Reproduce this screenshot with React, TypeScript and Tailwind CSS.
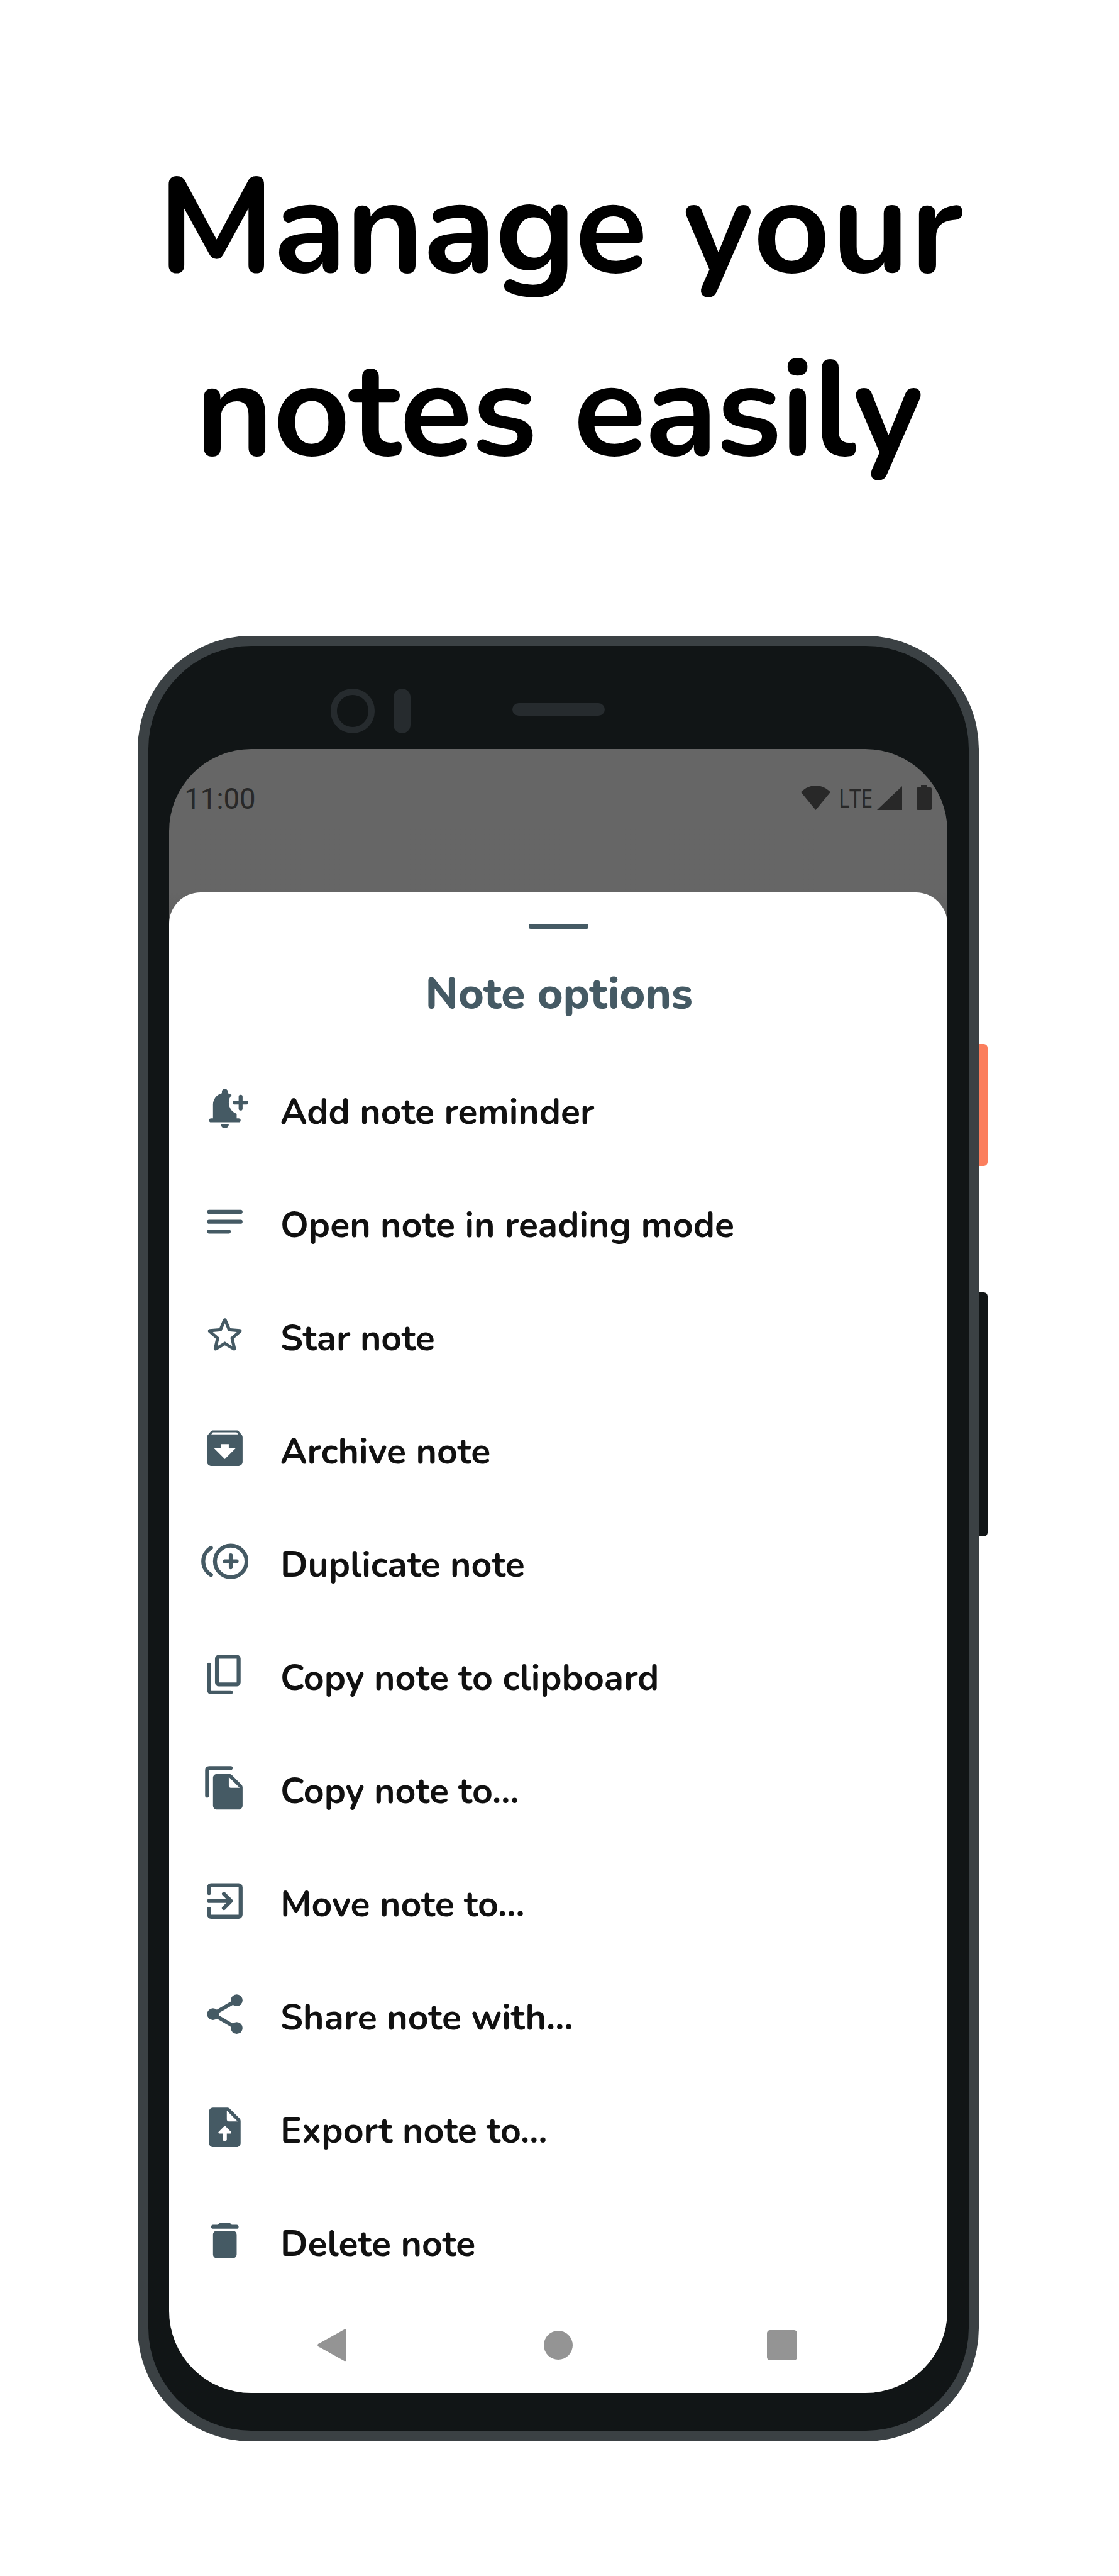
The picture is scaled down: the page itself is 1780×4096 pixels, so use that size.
import type { ReactNode } from "react";

const round = {
  fill: "none",
  stroke: "currentColor",
  strokeWidth: 2,
  strokeLinecap: "round",
  strokeLinejoin: "round",
} as const;

const items: { label: string; icon: ReactNode }[] = [
  {
    label: "Add note reminder",
    icon: (
      <>
        <path d="M10 20h4c0 1.1-.9 2-2 2s-2-.9-2-2zM14 9c0 2.61 1.67 4.83 4 5.66V17h1a1 1 0 0 1 0 2H5a1 1 0 0 1 0-2h1v-7c0-2.79 1.91-5.14 4.5-5.8V3.5c0-.83.67-1.5 1.5-1.5s1.5.67 1.5 1.5v.7c.71.18 1.36.49 1.95.9C14.54 6.14 14 7.51 14 9z" />
        <path d="M20 6v6M17 9h6" {...round} />
      </>
    ),
  },
  { label: "Open note in reading mode", icon: <path d="M4 7h16M4 12h16M4 17h10" {...round} /> },
  {
    label: "Star note",
    icon: (
      <path d="M19.65 9.04l-4.84-.42-1.89-4.45c-.34-.81-1.5-.81-1.84 0L9.19 8.63l-4.83.41c-.88.07-1.24 1.17-.57 1.75l3.67 3.18-1.1 4.72c-.2.86.73 1.54 1.49 1.08l4.15-2.5 4.15 2.51c.76.46 1.69-.22 1.49-1.08l-1.1-4.73 3.67-3.18c.67-.58.32-1.68-.56-1.75zM12 15.4l-3.76 2.27 1-4.28-3.32-2.88 4.38-.38L12 6.1l1.71 4.04 4.38.38-3.32 2.88 1 4.28L12 15.4z" />
    ),
  },
  {
    label: "Archive note",
    icon: (
      <path d="M20.54 5.23l-1.39-1.68C18.88 3.21 18.47 3 18 3H6c-.47 0-.88.21-1.16.55L3.46 5.23C3.17 5.57 3 6.02 3 6.5V19c0 1.1.9 2 2 2h14c1.1 0 2-.9 2-2V6.5c0-.48-.17-.93-.46-1.27zM12 17.5L6.5 12H10v-2h4v2h3.5L12 17.5zM5.12 5l.81-1h12l.94 1H5.12z" />
    ),
  },
  {
    label: "Duplicate note",
    icon: (
      <g {...round}>
        <circle cx="15" cy="12" r="8" />
        <path d="M15 9v6M12 12h6M5 5.1a8 8 0 0 0 0 13.8" />
      </g>
    ),
  },
  {
    label: "Copy note to clipboard",
    icon: (
      <g {...round}>
        <rect x="8" y="3" width="11" height="14" rx="1" />
        <path d="M4 7v13a1 1 0 0 0 1 1h10" />
      </g>
    ),
  },
  {
    label: "Copy note to…",
    icon: (
      <>
        <path d="M3 16V3a1 1 0 0 1 1-1h11" {...round} />
        <path d="M14.17 5H8c-1.1 0-2 .9-2 2v14c0 1.1.89 2 1.99 2H19c1.1 0 2-.9 2-2v-9.17c0-.53-.21-1.04-.59-1.42l-4.83-4.83c-.37-.37-.88-.58-1.41-.58zM14 11V6.5l5.5 5.5H15c-.55 0-1-.45-1-1z" />
      </>
    ),
  },
  {
    label: "Move note to…",
    icon: <path d="M4 8V5a1 1 0 0 1 1-1h14a1 1 0 0 1 1 1v14a1 1 0 0 1-1 1H5a1 1 0 0 1-1-1v-3M4 12h11M11.5 8.4l3.6 3.6-3.6 3.6" {...round} />,
  },
  {
    label: "Share note with…",
    icon: (
      <>
        <circle cx="6" cy="12" r="3" />
        <circle cx="18" cy="5" r="3" />
        <circle cx="18" cy="19" r="3" />
        <path d="M18 5L6 12l12 7" {...round} />
      </>
    ),
  },
  {
    label: "Export note to…",
    icon: (
      <path d="M14.59 2.59c-.38-.38-.89-.59-1.42-.59H6c-1.1 0-2 .9-2 2v16c0 1.1.89 2 1.99 2H18c1.1 0 2-.9 2-2V8.83c0-.53-.21-1.04-.59-1.41l-4.82-4.83zM13 8V3.5L18.5 9H14c-.55 0-1-.45-1-1zM9.2 15.15c-.45 0-.67-.54-.35-.85l2.8-2.8a.5.5 0 0 1 .7 0l2.8 2.8c.32.31.1.85-.35.85H13V18a1 1 0 0 1-2 0v-2.85H9.2z" />
    ),
  },
  {
    label: "Delete note",
    icon: (
      <path d="M6 19c0 1.1.9 2 2 2h8c1.1 0 2-.9 2-2V9c0-1.1-.9-2-2-2H8c-1.1 0-2 .9-2 2v10zM18 4h-2.5l-.71-.71c-.18-.18-.44-.29-.7-.29H9.91c-.26 0-.52.11-.7.29L8.5 4H6c-.55 0-1 .45-1 1s.45 1 1 1h12c.55 0 1-.45 1-1s-.45-1-1-1z" />
    ),
  },
];

function StatusBar() {
  return (
    <div className="flex h-[228px] items-start justify-between pt-[53px] pr-[25px] pl-[24px] text-[#282828]">
      <span className="font-['Roboto'] text-[45.5px] leading-[54px]">11:00</span>
      <div className="flex h-[44px] items-end">
        <svg className="h-[39px] w-[47px]" viewBox="0 0 47 39" fill="currentColor">
          <path d="M0 10.5C14-3.5 33-3.5 47 10.5L23.5 39z" />
        </svg>
        <span className="ml-[13px] flex h-[39px] w-[54px] items-center">
          <span className="origin-left scale-x-[0.84] font-['Noto_Sans'] text-[40px] leading-[39px]">LTE</span>
        </span>
        <svg className="ml-[7px] h-[38px] w-[40px]" viewBox="0 0 40 38" fill="currentColor">
          <path d="M40 0V38H0z" />
        </svg>
        <svg className="ml-[23px] h-[40px] w-[24px]" viewBox="0 0 24 40" fill="currentColor">
          <path d="M7 0h10v4h5a2 2 0 0 1 2 2v32a2 2 0 0 1-2 2H2a2 2 0 0 1-2-2V6a2 2 0 0 1 2-2h5z" />
        </svg>
      </div>
    </div>
  );
}

function NavBar() {
  return (
    <div className="flex h-[151px] items-center pt-[1.5px] pl-[235.5px] text-[#949494]">
      <svg className="h-[52px] w-[46px]" viewBox="0 0 46 52" fill="currentColor">
        <path d="M1 24L43 .8Q46 0 46 3V49Q46 52 43 51.2L1 28Q-.6 26 1 24z" />
      </svg>
      <div className="ml-[314px] size-[46.5px] rounded-full bg-[#949494]" />
      <div className="ml-[308.5px] size-[48px] rounded-[5px] bg-[#949494]" />
    </div>
  );
}

function Sheet() {
  return (
    <div className="flex flex-1 flex-col items-center rounded-t-[50px] bg-white">
      <div className="mt-[50px] h-[8px] w-[95px] rounded-[3px] bg-[#455a64]" />
      <h2 className="mt-[55.5px] h-[140.5px] pl-[2px] text-[69.5px] leading-[97px] font-extrabold text-[#455a64]">Note options</h2>
      <ul className="w-full">
        {items.map((item) => (
          <li key={item.label} className="flex h-[180px] items-center pl-[50.4px]">
            <svg className="size-[75.3px] text-[#455a64]" viewBox="0 0 24 24" fill="currentColor" fillRule="evenodd">
              {item.icon}
            </svg>
            <span className="pt-[11px] pl-[51px] text-[57.2px] leading-[79px] font-bold text-[#111111]">{item.label}</span>
          </li>
        ))}
      </ul>
      <div className="w-full">
        <NavBar />
      </div>
    </div>
  );
}

function Phone() {
  return (
    <div className="relative mt-[211.5px] ml-[219.2px] h-[2871px] w-[1338.3px] rounded-[180px] bg-[#3b4144] p-[16.7px]">
      <div className="absolute top-[649px] left-full h-[194px] w-[13.3px] rounded-r-[6px] bg-[#fb7e5d]" />
      <div className="absolute top-[1044px] left-full h-[388.5px] w-[13.3px] rounded-r-[6px] bg-[#111516]" />
      <div className="flex h-full flex-col rounded-[163.5px] bg-[#111516] px-[33.4px] pb-[60px]">
        <div className="flex h-[163.7px] shrink-0 items-start pt-[68px] pl-[256.5px]">
          <div className="size-[70.5px] rounded-full border-[10px] border-[#262b2e]" />
          <div className="ml-[30px] h-[70.5px] w-[27px] rounded-full bg-[#262b2e]" />
          <div className="mt-[22.5px] ml-[161.5px] h-[20px] w-[147.5px] rounded-full bg-[#262b2e]" />
        </div>
        <div className="flex flex-1 flex-col overflow-hidden rounded-[130.5px] bg-linear-to-b from-[#666666] from-[228px] to-[#5c5c5c] to-[290px]">
          <StatusBar />
          <Sheet />
        </div>
      </div>
    </div>
  );
}

export default function App() {
  return (
    <div className="h-[4096px] w-[1780px] overflow-hidden bg-white pt-[217px] font-['Nunito','Lato',sans-serif]">
      <h1 className="text-[213.3px] leading-[291px] font-bold whitespace-nowrap text-black">
        <span className="block pl-[251.4px]">
          <span className="tracking-[-1.8px]">Manage</span> <span className="tracking-[1.8px]">your</span>
        </span>
        <span className="block pl-[310.5px]">
          <span className="tracking-[-0.7px]">notes</span> <span className="tracking-[-2.3px]">easily</span>
        </span>
      </h1>
      <Phone />
    </div>
  );
}
